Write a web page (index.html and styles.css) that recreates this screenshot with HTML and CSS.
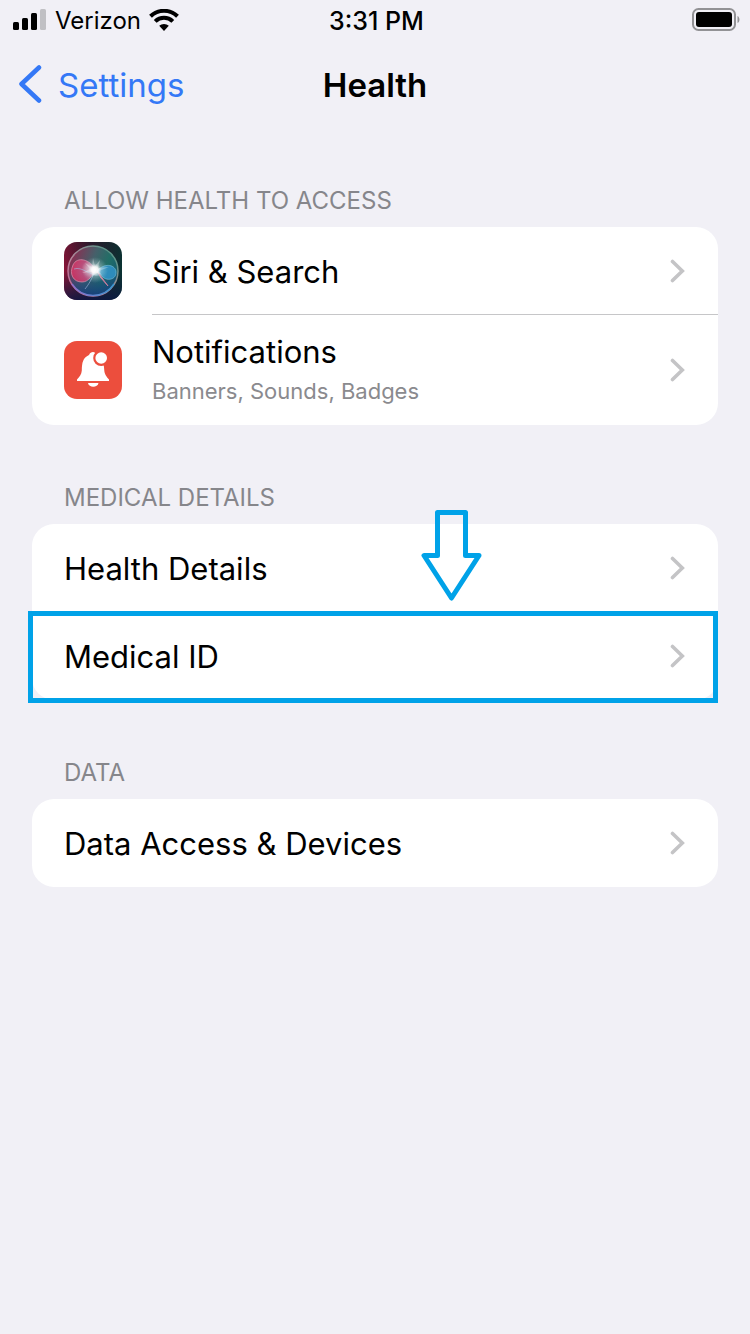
FILE: index.html
```html
<!DOCTYPE html>
<html lang="en">
<head>
<meta charset="utf-8">
<meta name="viewport" content="width=device-width, initial-scale=1">
<title>Health</title>
<link rel="stylesheet" href="styles.css">
</head>
<body>
<svg class="defs" width="0" height="0" aria-hidden="true">
  <symbol id="chevron" viewBox="0 0 16 24"><path d="M2.500 2.500 12.300 12 2.500 21.500" fill="none" stroke="currentColor" stroke-width="3.600" stroke-linecap="round" stroke-linejoin="miter"/></symbol>
</svg>
<div class="status">
  <div class="carrier">
    <svg width="34" height="22" viewBox="0 0 34 22" aria-hidden="true">
      <rect x="0" y="13" width="6" height="8" rx="1.500"/><rect x="9" y="9" width="6" height="12" rx="1.500"/><rect x="18" y="4" width="6" height="17" rx="1.500"/><rect x="27" y="0" width="6" height="21" rx="1.500" fill="#c0c0c4"/>
    </svg>
    <span class="carrier-name">Verizon</span>
    <svg width="30" height="22" viewBox="0 0 30 22" aria-hidden="true">
      <path d="M1.500 7.300a19.300 19.300 0 0 1 27 0M6.200 12.400a12.600 12.600 0 0 1 17.600 0" fill="none" stroke="#000" stroke-width="4"/>
      <path d="M10.200 16.800a7 7 0 0 1 9.600 0L15 22z"/>
    </svg>
  </div>
  <time class="time">3:31 PM</time>
  <svg class="battery" width="48" height="24" viewBox="0 0 48 24" role="img" aria-label="Battery full">
    <rect x="1" y="1" width="42" height="21" rx="5.500" fill="none" stroke="#929295" stroke-width="2"/>
    <rect x="4" y="4" width="36" height="15" rx="3"/>
    <path d="M45.500 8c2.600 1 2.600 6 0 7z" fill="#929295"/>
  </svg>
</div>
<header class="nav">
  <a class="back" href="#settings">
    <svg width="24" height="40" viewBox="0 0 24 40" aria-hidden="true"><path d="M21 3.500 3.500 20 21 36.500" fill="none" stroke="currentColor" stroke-width="4.500" stroke-linecap="round" stroke-linejoin="round"/></svg>
    <span class="back-name">Settings</span>
  </a>
  <h1 class="title">Health</h1>
</header>
<main class="content">
  <section class="group">
    <h2 class="label">ALLOW HEALTH TO ACCESS</h2>
    <div class="card">
      <a class="row" href="#siri">
        <svg class="app" width="58" height="58" viewBox="0 0 58 58" aria-hidden="true">
          <defs>
            <linearGradient id="bg" x1="0" y1="0" x2="1" y2="0"><stop offset="0" stop-color="#8b1337"/><stop offset=".45" stop-color="#32182f"/><stop offset="1" stop-color="#0b3433"/></linearGradient>
            <linearGradient id="shade" x1="0" y1="0" x2="0" y2="1"><stop offset="0" stop-color="#111d20" stop-opacity=".25"/><stop offset=".5" stop-color="#102038" stop-opacity="0"/><stop offset="1" stop-color="#0b1844" stop-opacity=".85"/></linearGradient>
            <linearGradient id="orb" x1="0" y1=".3" x2="1" y2=".7"><stop offset="0" stop-color="#8f2b50"/><stop offset=".42" stop-color="#45606a"/><stop offset=".7" stop-color="#216e66"/><stop offset="1" stop-color="#125873"/></linearGradient>
            <linearGradient id="low" x1="0" y1="0" x2="0" y2="1"><stop offset=".5" stop-color="#17477f" stop-opacity="0"/><stop offset="1" stop-color="#173c7c" stop-opacity=".95"/></linearGradient>
            <linearGradient id="ring" x1="0" y1="1" x2="1" y2="0"><stop offset="0" stop-color="#c25b93"/><stop offset=".4" stop-color="#b5869a"/><stop offset="1" stop-color="#3e9982"/></linearGradient>
            <linearGradient id="ringlow" x1="0" y1="0" x2="1" y2="0"><stop offset="0" stop-color="#8f70ca"/><stop offset="1" stop-color="#3795cf"/></linearGradient>
            <radialGradient id="pink" cx=".8" cy=".4" r=".8"><stop offset="0" stop-color="#f7c5d7"/><stop offset=".5" stop-color="#c94f80"/><stop offset="1" stop-color="#d73465"/></radialGradient>
            <radialGradient id="glow"><stop offset="0" stop-color="#fff"/><stop offset=".25" stop-color="#fff" stop-opacity=".9"/><stop offset=".5" stop-color="#d7f1f3" stop-opacity=".35"/><stop offset="1" stop-color="#b7e5e5" stop-opacity="0"/></radialGradient>
          </defs>
          <rect width="58" height="58" rx="13" fill="url(#bg)"/><rect width="58" height="58" rx="13" fill="url(#shade)"/>
          <circle cx="29" cy="29" r="25" fill="url(#orb)"/><circle cx="29" cy="29" r="25" fill="url(#low)"/>
          <circle cx="29" cy="29" r="25" fill="none" stroke="url(#ring)" stroke-width="1.500"/>
          <path d="M8 42a25 25 0 0 0 42 0" fill="none" stroke="url(#ringlow)" stroke-width="1.500"/>
          <path d="M32 28C26 17 13 14 9 23c-4 9 0 17 9 17 7 0 10-7 14-12z" fill="url(#pink)" opacity=".85" stroke="#f1a0bd" stroke-width=".7"/>
          <path d="M33 29c7-8 17-7 19 0 1 8-7 10-12 7-3-2-4-5-7-7z" fill="#3191c4" opacity=".9" stroke="#77bed8" stroke-width=".7"/>
          <path d="M33 29 44 44l-7-8z" fill="#dc9bb6" stroke="#c67b9b"/>
          <path d="M31 28c-3 9-6 14-10 19M10 27c8-3 16 7 25 6" fill="none" stroke="#a7b7df" opacity=".6"/>
          <circle cx="31" cy="28" r="13" fill="url(#glow)"/>
          <path d="m29 16 2 8 5-6-2 8 11-1-10 4 3 4-6-2-4 4v-5l-10 1 8-4-5-6 7 4z" fill="#fff" opacity=".3"/>
        </svg>
        <span class="text">Siri &amp; Search</span>
        <svg class="chev" width="16" height="24"><use href="#chevron"/></svg>
      </a>
      <a class="row tall" href="#notifications">
        <svg class="app" width="58" height="58" viewBox="0 0 58 58" aria-hidden="true">
          <rect width="58" height="58" rx="13" fill="#ec4e3d"/>
          <path d="M13 40v-1.500c2.500-3 4.500-5 4.800-9 .2-8 1-12.500 7.200-15.500 1-2.200 2.300-3 4-3 1.600 0 2.800.8 3.800 2.700 4.800 2 7.200 6.800 7.400 14.800.2 5 2.300 7 4.800 10V40z" fill="#fff"/>
          <path d="M24 42h10.500c-.8 5-9.700 5-10.500 0z" fill="#fff"/>
          <circle cx="37.200" cy="17" r="8" fill="#ec4e3d"/><circle cx="37.200" cy="17" r="5.800" fill="#fff"/>
        </svg>
        <span class="text">Notifications<span class="detail">Banners, Sounds, Badges</span></span>
        <svg class="chev" width="16" height="24"><use href="#chevron"/></svg>
      </a>
    </div>
  </section>
  <section class="group">
    <h2 class="label">MEDICAL DETAILS</h2>
    <div class="card">
      <a class="row" href="#details"><span class="text">Health Details</span><svg class="chev" width="16" height="24"><use href="#chevron"/></svg></a>
      <a class="row marked" href="#medical-id"><span class="text">Medical ID</span><svg class="chev" width="16" height="24"><use href="#chevron"/></svg></a>
      <svg class="arrow" width="62" height="92" viewBox="0 0 62 92" aria-hidden="true"><path d="M16.500 2.500h28v43h13.500L30.500 88 3 45.500h13.500z" fill="none" stroke="#00a2e8" stroke-width="5" stroke-linejoin="round"/></svg>
    </div>
  </section>
  <section class="group">
    <h2 class="label">DATA</h2>
    <div class="card">
      <a class="row" href="#data"><span class="text">Data Access &amp; Devices</span><svg class="chev" width="16" height="24"><use href="#chevron"/></svg></a>
    </div>
  </section>
</main>
</body>
</html>
```
FILE: styles.css
```css
* { box-sizing: border-box; }
body {
  margin: 0;
  min-height: 100vh;
  background: #f1f0f6;
  color: #000;
  font-family: Inter, Roboto, "Liberation Sans", sans-serif;
  font-size: 31px;
  line-height: 40px;
}
a { color: inherit; text-decoration: none; }
svg { display: block; flex: none; }
.defs { position: absolute; }
.status, .nav {
  display: grid;
  grid-template-columns: 1fr auto 1fr;
  align-items: center;
}
.status {
  height: 40px;
  padding: 0 10px 0 13px;
  font-size: 24px;
  line-height: 38px;
}
.carrier { display: flex; align-items: center; gap: 8px; }
.carrier-name, .time, .back-name, .title, .text { padding-top: 2px; }
.time { font-size: 25px; font-weight: 500; }
.battery { justify-self: end; }
.nav {
  height: 88px;
  padding: 0 18px;
  font-size: 33px;
}
.back {
  display: flex;
  align-items: center;
  gap: 16px;
  color: #3478f6;
}
.title { margin: 0; font-size: 33px; font-weight: 600; }
.content {
  display: flex;
  flex-direction: column;
  gap: 59px;
  padding: 59px 32px;
}
.label {
  margin: 0 32px 12px;
  color: #86868b;
  font-size: 24px;
  font-weight: 400;
  line-height: 28px;
}
.card {
  position: relative;
  background: #fff;
  border-radius: 22px;
}
.row {
  position: relative;
  display: flex;
  align-items: center;
  min-height: 88px;
  padding-left: 32px;
}
.app { margin-right: 30px; }
.text { flex: 1; }
.chev { color: #c4c4c6; margin-right: 32px; }
.tall { min-height: 110px; }
.tall::before {
  content: "";
  position: absolute;
  top: -1px;
  left: 120px;
  right: 0;
  border-top: 1px solid #c6c6c8;
}
.detail {
  display: block;
  color: #8a8a8e;
  font-size: 22px;
  line-height: 38px;
}
.marked::after {
  content: "";
  position: absolute;
  inset: -1px 0 -3px -4px;
  border: 5px solid #00a2e8;
}
.arrow { position: absolute; top: -14px; left: 389px; }
```
